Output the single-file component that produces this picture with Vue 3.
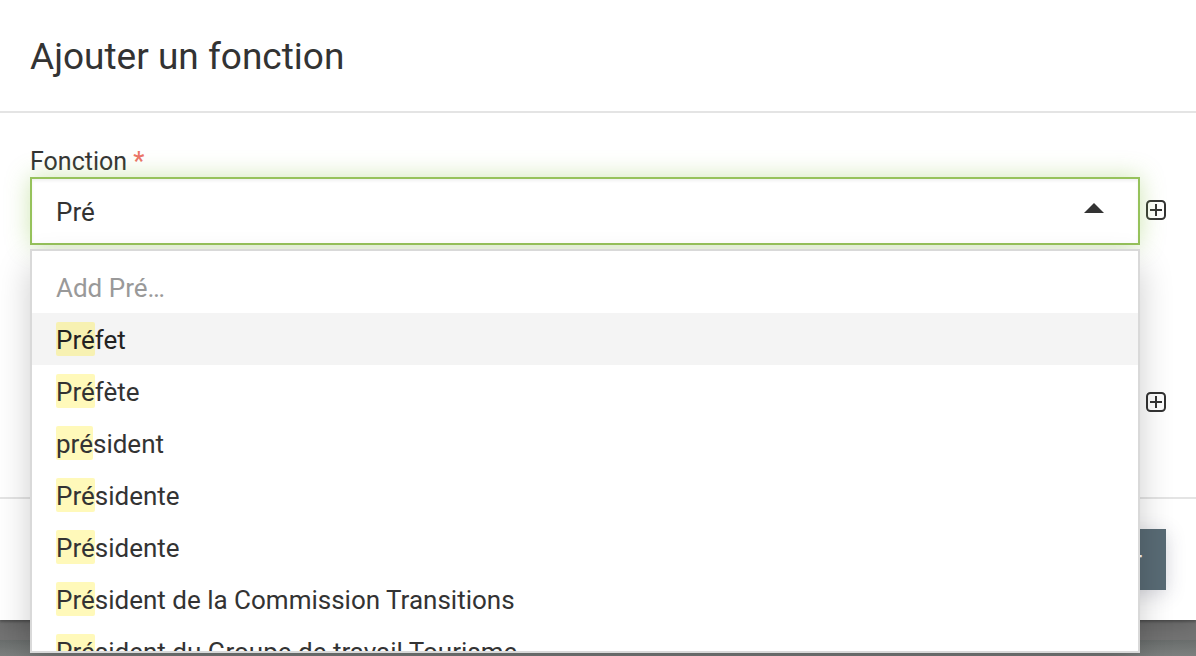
<script setup>
import { ref, computed } from 'vue'

const query = ref('Pré')
const active = ref(0)
const names = [
  'Préfet',
  'Préfète',
  'président',
  'Présidente',
  'Présidente',
  'Président de la Commission Transitions',
  'Président du Groupe de travail Tourisme',
]

const options = computed(() =>
  names.map((name) => ({
    match: name.slice(0, query.value.length),
    rest: name.slice(query.value.length),
  }))
)
</script>

<template>
  <main class="page">
    <form class="dialog" @submit.prevent>
      <header class="header">
        <h1>Ajouter un fonction</h1>
      </header>

      <div class="body">
        <label class="label" for="fonction">Fonction <span class="required">*</span></label>
        <div class="row">
          <div class="select">
            <div class="control">
              <input id="fonction" v-model="query" type="text" autocomplete="off" role="combobox" aria-expanded="true" aria-controls="choices" />
              <svg class="caret" viewBox="0 0 20 10" aria-hidden="true"><path d="M0 10 L10 0 L20 10 Z" /></svg>
            </div>
            <div id="choices" class="dropdown" role="listbox">
              <div class="option create" role="option">Add {{ query }}…</div>
              <div
                v-for="(option, i) in options"
                :key="i"
                class="option"
                :class="{ active: i === active }"
                role="option"
                :aria-selected="i === active"
                @mouseenter="active = i"
              ><span class="hit">{{ option.match }}</span>{{ option.rest }}</div>
            </div>
          </div>
          <button class="add" type="button" aria-label="Ajouter">
            <svg viewBox="0 0 20 20" aria-hidden="true">
              <rect x="1" y="1" width="18" height="18" rx="3.5" />
              <path d="M10 4v12M4 10h12" />
            </svg>
          </button>
        </div>

        <div class="row second">
          <div class="select"></div>
          <button class="add" type="button" aria-label="Ajouter">
            <svg viewBox="0 0 20 20" aria-hidden="true">
              <rect x="1" y="1" width="18" height="18" rx="3.5" />
              <path d="M10 4v12M4 10h12" />
            </svg>
          </button>
        </div>
      </div>

      <footer class="footer">
        <button class="submit" type="submit">Ajouter</button>
      </footer>
    </form>
    <div class="backdrop"></div>
  </main>
</template>

<style>
html,
body {
  height: 100%;
  overflow: hidden;
}
#app {
  height: 100%;
}
</style>

<style scoped>
* {
  box-sizing: border-box;
}
.page {
  display: flex;
  flex-direction: column;
  height: 100%;
  overflow: hidden;
  font-family: Roboto, sans-serif;
  font-size: 26px;
  color: #333;
  background: #666;
}
.dialog {
  position: relative;
  flex: none;
  background: #fff;
  box-shadow: 0 2px 2px rgba(0, 0, 0, 0.25), 0 4px 24px rgba(0, 0, 0, 0.24);
}
.header {
  padding: 33px 30px 30px;
  border-bottom: 2px solid #e4e4e4;
}
h1 {
  margin: 0;
  font-size: 37px;
  line-height: 48px;
  font-weight: 400;
}
.body {
  padding: 34px 30px 60px;
}
.label {
  display: block;
  font-size: 25px;
  line-height: 30px;
}
.required {
  font-weight: 500;
  color: #ec7468;
}
.row {
  display: flex;
  align-items: center;
  gap: 6px;
}
.second {
  margin-top: 124px;
}
.select {
  position: relative;
  flex: 1;
  min-height: 68px;
}
.control {
  display: flex;
  align-items: center;
  height: 68px;
  padding: 0 34px 0 24px;
  border: 2px solid #96c25b;
  background: #fff;
  box-shadow: 0 0 24px rgba(140, 195, 74, 0.42), inset 0 2px 3px rgba(0, 0, 0, 0.06);
}
.control input {
  flex: 1;
  min-width: 0;
  padding: 2px 0 0;
  border: 0;
  outline: 0;
  font: inherit;
  line-height: 32px;
  color: inherit;
  background: transparent;
}
.caret {
  width: 20px;
  height: 10px;
  margin-bottom: 6px;
  fill: #333;
}
.dropdown {
  position: absolute;
  top: 72px;
  left: 0;
  right: 0;
  z-index: 2;
  height: 404px;
  padding: 10px 0;
  overflow: hidden;
  border: 2px solid #d9d9d9;
  background: #fff;
  box-shadow: 0 16px 32px rgba(0, 0, 0, 0.2);
}
.option {
  padding: 11px 24px 9px;
  line-height: 32px;
  white-space: nowrap;
}
.create {
  color: #999;
}
.active {
  color: #222;
  background: #f4f4f4;
}
.hit {
  padding: 3px 0 1px;
  border-radius: 2px;
  background: rgba(255, 237, 40, 0.32);
}
.add {
  display: flex;
  width: 20px;
  height: 20px;
  margin-bottom: 2px;
  padding: 0;
  border: 0;
  background: transparent;
}
.add svg {
  width: 20px;
  height: 20px;
  fill: none;
  stroke: #333;
  stroke-width: 2;
}
.footer {
  display: flex;
  justify-content: flex-end;
  padding: 30px;
  border-top: 2px solid #e4e4e4;
}
.submit {
  height: 61px;
  padding: 0 24px;
  border: 0;
  font: inherit;
  color: #fff;
  background: #596b75;
  box-shadow: 0 4px 20px rgba(60, 60, 90, 0.22);
}
.backdrop {
  flex: 1;
  background: linear-gradient(#757575 20px, #6b6f6e 20px, #7c7f7e);
}
</style>
